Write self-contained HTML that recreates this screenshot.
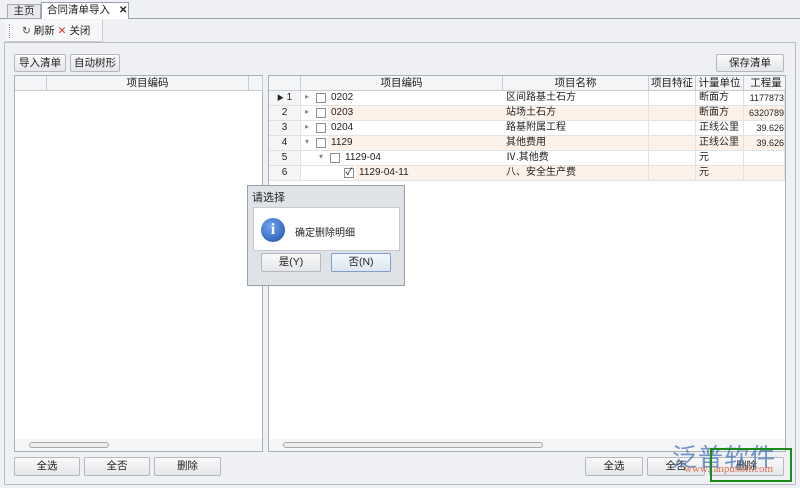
<!DOCTYPE html><html><head><meta charset="utf-8"><style>
*{box-sizing:border-box;margin:0;padding:0}
body{width:800px;height:488px;background:#eef0f3;font-family:"Liberation Sans","Noto Sans CJK SC",sans-serif;font-size:11px;color:#222;position:relative;overflow:hidden}
.a{position:absolute}
.btn{position:absolute;border:1px solid #b5b9bf;border-radius:2px;background:linear-gradient(#fafafa,#e4e6e9);text-align:center;line-height:16px;font-size:10.5px}
.grid{position:absolute;background:#fff;border:1px solid #a9afb7}
.hd{position:absolute;top:0;height:15px;border-right:1px solid #c9ccd1;border-bottom:1px solid #c9ccd1;background:#f4f5f7;text-align:center;line-height:14px;font-size:10.5px}
.cell{position:absolute;height:15px;line-height:14px;border-right:1px solid #e2e2e2;border-bottom:1px solid #e2e2e2;padding-left:3px;white-space:nowrap;overflow:hidden;font-size:10px}
.cb{position:absolute;width:10px;height:10px;border:1px solid #8a8f96;background:#fff}
</style></head><body>
<div class="a" style="left:0;top:18px;width:800px;height:1px;background:#9aa0a8"></div>
<div class="a" style="left:7px;top:4px;width:34px;height:15px;border:1px solid #aab;background:#e6e8eb;line-height:13px;text-align:center;font-size:10.5px">主页</div>
<div class="a" style="left:41px;top:2px;width:88px;height:17px;border:1px solid #9aa0a8;border-bottom:none;background:#fff;line-height:15px;padding-left:5px;font-size:10.5px;white-space:nowrap">合同清单导入<span style="margin-left:9px;font-weight:bold;font-size:10px">✕</span></div>
<div class="a" style="left:5px;top:20px;width:98px;height:22px;background:#f6f7f9;border-right:1px solid #ccc;border-bottom:1px solid #ccc"></div>
<div class="a" style="left:9px;top:24px;width:2px;height:14px;border-left:1px dotted #999"></div>
<div class="a" style="left:22px;top:24px;line-height:14px;font-size:10.5px"><span style="color:#555">↻</span> 刷新 <span style="color:#d33">✕</span> 关闭</div>
<div class="a" style="left:4px;top:42px;width:792px;height:443px;border:1px solid #b8bcc2;background:#eef0f3"></div>
<div class="btn" style="left:14px;top:54px;width:52px;height:18px">导入清单</div>
<div class="btn" style="left:70px;top:54px;width:50px;height:18px">自动树形</div>
<div class="btn" style="left:716px;top:54px;width:68px;height:18px">保存清单</div>
<div class="grid" style="left:14px;top:75px;width:249px;height:377px">
<div class="hd" style="left:0;width:32px"></div>
<div class="hd" style="left:32px;width:202px">项目编码</div>
<div class="hd" style="left:234px;width:14px"></div>
<div class="a" style="left:0;bottom:0;width:247px;height:12px;background:#f4f5f7"></div>
<div class="a" style="left:14px;bottom:3px;width:80px;height:6px;border:1px solid #aaa;border-radius:3px;background:#eee"></div>
</div>
<div class="grid" style="left:268px;top:75px;width:518px;height:377px;overflow:hidden">
<div class="hd" style="left:0;width:32px"></div>
<div class="hd" style="left:32px;width:202px">项目编码</div>
<div class="hd" style="left:234px;width:146px">项目名称</div>
<div class="hd" style="left:380px;width:47px">项目特征</div>
<div class="hd" style="left:427px;width:48px">计量单位</div>
<div class="hd" style="left:475px;width:45px">工程量</div>
<div class="a" style="left:0;bottom:0;width:516px;height:12px;background:#f4f5f7"></div>
<div class="a" style="left:14px;bottom:3px;width:260px;height:6px;border:1px solid #aaa;border-radius:3px;background:#eee"></div>
</div>
<div id="rows"></div>
<script>
var R=[["1","▸","0202","区间路基土石方","断面方","1177873",0,0],["2","▸","0203","站场土石方","断面方","6320789",1,0],["3","▸","0204","路基附属工程","正线公里","39.626",0,0],["4","▾","1129","其他费用","正线公里","39.626",1,0],["5","▾","1129-04","Ⅳ.其他费","元","",0,1],["6","","1129-04-11","八、安全生产费","元","",1,2]];
var h="";R.forEach(function(r,i){var y=91+i*15,bg=r[6]?"#fdf2ea":"#fff";
h+='<div class="cell" style="left:269px;top:'+y+'px;width:32px;background:#f4f5f7;text-align:center;padding:0">'+(i==0?'<span style="font-size:7px">▶</span> ':'')+r[0]+'</div>';
var ind=r[7]*14;
h+='<div class="cell" style="left:301px;top:'+y+'px;width:202px;background:#fff"></div>';
h+='<div class="a" style="left:'+(305+ind)+'px;top:'+(y+1)+'px;font-size:8px;color:#888">'+r[1]+'</div>';
if(r[7]<2)h+='<div class="cb" style="left:'+(316+ind)+'px;top:'+(y+2)+'px"></div>';else h+='<div class="cb" style="left:344px;top:'+(y+2)+'px;text-align:center;line-height:8px;font-size:10px">✓</div>';
var tx=r[7]==0?328:(r[7]==1?342:356);
h+='<div class="cell" style="left:'+tx+'px;top:'+y+'px;width:'+(503-tx)+'px;background:'+bg+';border-right:none">'+r[2]+'</div>';
h+='<div class="cell" style="left:503px;top:'+y+'px;width:146px;background:'+bg+'">'+r[3]+'</div>';
h+='<div class="cell" style="left:649px;top:'+y+'px;width:47px;background:'+bg+'"></div>';
h+='<div class="cell" style="left:696px;top:'+y+'px;width:48px;background:'+bg+'">'+r[4]+'</div>';
h+='<div class="cell" style="left:744px;top:'+y+'px;width:41px;background:'+bg+';text-align:right;padding-right:0;font-size:9px">'+r[5]+'</div>';});
document.getElementById("rows").innerHTML=h;
</script>
<div class="btn" style="left:14px;top:457px;width:66px;height:19px">全选</div>
<div class="btn" style="left:84px;top:457px;width:66px;height:19px">全否</div>
<div class="btn" style="left:154px;top:457px;width:67px;height:19px">删除</div>
<div class="btn" style="left:585px;top:457px;width:58px;height:19px">全选</div>
<div class="btn" style="left:647px;top:457px;width:58px;height:19px">全否</div>
<div class="btn" style="left:709px;top:457px;width:75px;height:19px">删除</div>
<div class="a" style="left:672px;top:438px;font-size:25px;color:#3f6fb3;opacity:.7;letter-spacing:1px">泛普软件</div>
<div class="a" style="left:684px;top:463px;font-size:11px;color:#e07050;font-family:'Liberation Serif',serif">www.fanpusoft.com</div>
<div class="a" style="left:710px;top:448px;width:82px;height:34px;border:2px solid #1a8a1a"></div>
<div class="a" style="left:247px;top:185px;width:158px;height:101px;border:1px solid #9aa0a8;background:#dfe2e6">
<div class="a" style="left:4px;top:3px;font-size:11px">请选择</div>
<div class="a" style="left:5px;top:21px;width:147px;height:44px;background:#fff;border:1px solid #c8ccd2"></div>
<div class="a" style="left:13px;top:32px;width:24px;height:24px;border-radius:50%;background:radial-gradient(circle at 40% 35%,#6fa5ef,#1d4fa8);color:#fff;font-weight:bold;text-align:center;line-height:24px;font-family:'Liberation Serif',serif;font-size:16px">i</div>
<div class="a" style="left:47px;top:38px;font-size:10px">确定删除明细</div>
<div class="btn" style="left:13px;top:67px;width:60px;height:19px">是(Y)</div>
<div class="btn" style="left:83px;top:67px;width:60px;height:19px;border-color:#7fa0c8;background:linear-gradient(#f4f8fd,#dbe6f3)">否(N)</div>
</div>
</body></html>
